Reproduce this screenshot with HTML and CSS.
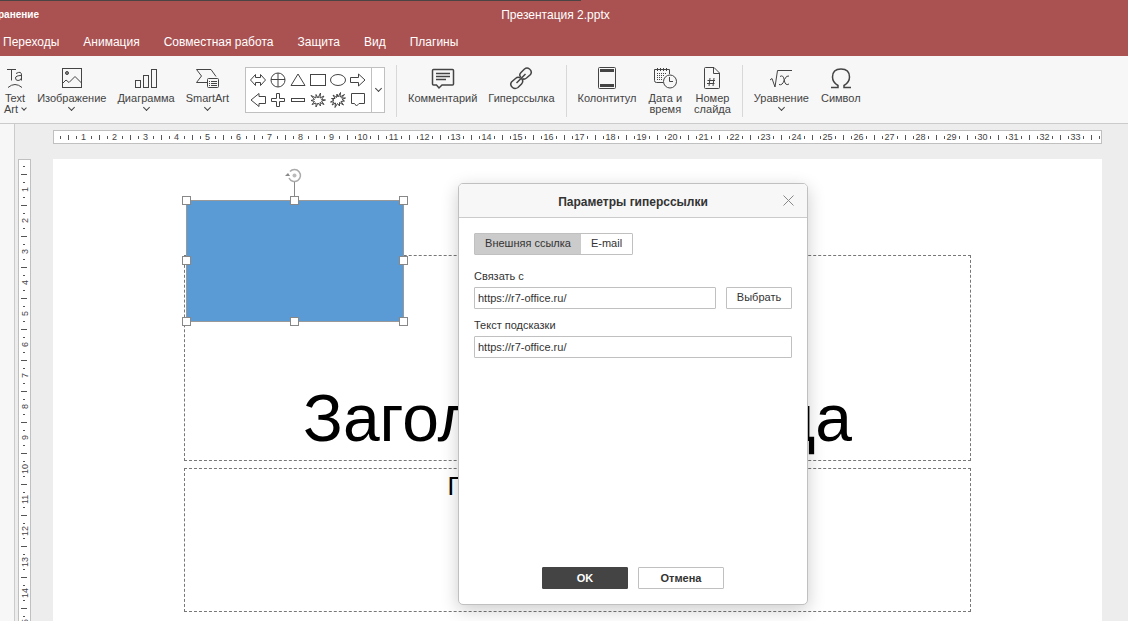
FILE: index.html
```
<!DOCTYPE html>
<html lang="ru">
<head>
  <meta charset="UTF-8">
  <title>Презентация 2.pptx</title>
  <meta name="viewport" content="width=device-width, initial-scale=1.0">
  <link rel="stylesheet" href="styles.css">
</head>
<body>

  <header class="app-header">
    <div class="title-row">
      <span class="doc-status">ранение</span>
      <h1>Презентация 2.pptx</h1>
    </div>
    <nav class="tabs">
      <a href="#">Переходы</a>
      <a href="#">Анимация</a>
      <a href="#">Совместная работа</a>
      <a href="#">Защита</a>
      <a href="#">Вид</a>
      <a href="#">Плагины</a>
    </nav>
  </header>

  <div class="toolbar">
    <div class="group">
      <button type="button" class="tool">
        <svg width="22" height="24" viewBox="0 0 22 24">
          <path d="M3 3.500H12M7.500 3.500V14.500M12 7.500Q17.500 4.500 17.500 9V14.500M17.500 9.500Q11.500 9.500 11.500 12Q11.500 14.500 14 14.500Q17 14.500 17.500 12M4 21.500Q11 15.500 18 21.500"/>
        </svg>
        <span>Text<br>Art <i class="caret inline"></i></span>
      </button>
      <button type="button" class="tool">
        <svg width="22" height="24" viewBox="0 0 22 24">
          <rect x="1.500" y="2.500" width="19" height="19"/>
          <circle cx="6" cy="7" r="1.500" fill="#888"/>
          <path d="M1.500 17.500L5 14L8 16.500L14 10.500L20.500 17"/>
        </svg>
        <span>Изображение</span>
        <i class="caret"></i>
      </button>
      <button type="button" class="tool">
        <svg width="24" height="24" viewBox="0 0 24 24">
          <rect x="1.500" y="14.500" width="5" height="7"/>
          <rect x="9.500" y="9.500" width="5" height="12"/>
          <rect x="17.500" y="3.500" width="5" height="18"/>
        </svg>
        <span>Диаграмма</span>
        <i class="caret"></i>
      </button>
      <button type="button" class="tool">
        <svg width="24" height="24" viewBox="0 0 24 24">
          <path d="M12 16.500H1.500L6.500 10L1.500 3.500H16L21 10.500"/>
          <rect x="12.500" y="12.500" width="11" height="9" rx="1"/>
          <path d="M14 15.500H15M16 15.500H22M14 17.500H15M16 17.500H22M14 19.500H15M16 19.500H22"/>
        </svg>
        <span>SmartArt</span>
        <i class="caret"></i>
      </button>

      <div class="gallery">
        <div class="shapes">
          <button type="button" aria-label="Двойная стрелка"><svg width="16" height="16" viewBox="0 0 16 16"><path d="M0.500 8L5.500 2.500V5.500H10.500V2.500L15.500 8L10.500 13.500V10.500H5.500V13.500Z"/></svg></button>
          <button type="button" aria-label="Круг с крестом"><svg width="16" height="16" viewBox="0 0 16 16"><circle cx="8" cy="8" r="7"/><path d="M8 1V15M1 7.500H15"/></svg></button>
          <button type="button" aria-label="Треугольник"><svg width="16" height="16" viewBox="0 0 16 16"><path d="M8 2L15 13.500H1Z"/></svg></button>
          <button type="button" aria-label="Прямоугольник"><svg width="16" height="16" viewBox="0 0 16 16"><rect x="0.500" y="2.500" width="15" height="11"/></svg></button>
          <button type="button" aria-label="Овал"><svg width="16" height="16" viewBox="0 0 16 16"><ellipse cx="8" cy="8" rx="7.500" ry="5.500"/></svg></button>
          <button type="button" aria-label="Стрелка вправо"><svg width="16" height="16" viewBox="0 0 16 16"><path d="M0.500 5.500H8.500V2L15 8L8.500 14V10.500H0.500Z"/></svg></button>
          <button type="button" aria-label="Стрелка влево"><svg width="16" height="16" viewBox="0 0 16 16"><path d="M15.500 4.500H9V1.500L1 8L9 14.500V11.500H15.500Z"/></svg></button>
          <button type="button" aria-label="Плюс"><svg width="16" height="16" viewBox="0 0 16 16"><path d="M6.500 1.500H9.500V6.500H14.500V9.500H9.500V14.500H6.500V9.500H1.500V6.500H6.500Z"/></svg></button>
          <button type="button" aria-label="Минус"><svg width="16" height="16" viewBox="0 0 16 16"><rect x="1.500" y="6.500" width="13" height="3"/></svg></button>
          <button type="button" aria-label="Вспышка 1"><svg width="16" height="16" viewBox="0 0 16 16"><path d="M8 6L10.500 1L10 6L14 4L11.500 7.500L15.500 8L11.500 9L14 12.500L10 10.500L10.500 14L8 11L6 15L6 11L2 12.500L4.500 9.500L1 8.500L4.500 7.500L1 3.500L6 6L6 2.500Z"/></svg></button>
          <button type="button" aria-label="Вспышка 2"><svg width="16" height="16" viewBox="0 0 16 16"><path d="M8 5L10.500 0.500L10 5L14.500 2.500L11.500 6L15.500 6L12 7.500L14.500 9L11 9.500L13.500 13L9.500 10.500L9.500 14L7.500 11.500L5 15.500L5.500 11L2 13L4 10L0.500 10L4 8L1.500 6.500L5 6.500L3 3L6.500 5.500L7 2Z"/></svg></button>
          <button type="button" aria-label="Выноска"><svg width="16" height="16" viewBox="0 0 16 16"><path d="M1.500 1.500H14.500V11.500H9L6.500 14L4.500 11.500H1.500Z"/></svg></button>
        </div>
        <button type="button" class="gallery-more" aria-label="Больше фигур"><i class="caret"></i></button>
      </div>
    </div>

    <div class="group">
      <button type="button" class="tool">
        <svg class="bold" width="24" height="24" viewBox="0 0 24 24">
          <path d="M1.500 4.500Q1.500 3.500 2.500 3.500H21.500Q22.500 3.500 22.500 4.500V18Q22.500 19 21.500 19H11L8 22L5.500 19H2.500Q1.500 19 1.500 18Z"/>
          <path d="M5 7.500H19M5 10.500H19M5 13.500H15"/>
        </svg>
        <span>Комментарий</span>
      </button>
      <button type="button" class="tool">
        <svg class="bold" width="24" height="24" viewBox="0 0 24 24">
          <path d="M12 11.500Q9.500 9 12 6.500L15.500 3Q18 1 20.500 3Q23.500 5.500 21.500 8.500L17.500 12Q15 14 13.500 12.500"/>
          <path d="M12.500 12.500Q15 15 12.500 18L9 21.500Q6 23.500 3.500 21.500Q0.500 19 2.500 16L6.500 12.500Q9 10.500 11 12M7.500 17L16.500 8"/>
        </svg>
        <span>Гиперссылка</span>
      </button>
    </div>

    <div class="group">
      <button type="button" class="tool">
        <svg width="20" height="24" viewBox="0 0 20 24">
          <rect x="1.500" y="1.500" width="17" height="21" rx="1"/>
          <path class="fill" d="M3 3H17V6H3ZM3 18H17V21H3Z"/>
        </svg>
        <span>Колонтитул</span>
      </button>
      <button type="button" class="tool">
        <svg width="24" height="24" viewBox="0 0 24 24">
          <path d="M10 16.500H3.500Q1.500 16.500 1.500 14.500V3.500H16.500V8M4.500 2V5M7.500 2V5M10.500 2V5M13.500 2V5"/>
          <path stroke-dasharray="1 1" d="M4 7.500H14M4 9.500H12M4 11.500H10M4 13.500H9"/>
          <circle cx="17" cy="15.500" r="6.500"/>
          <path d="M16.500 11V15.500H20"/>
        </svg>
        <span>Дата и<br>время</span>
      </button>
      <button type="button" class="tool">
        <svg width="20" height="24" viewBox="0 0 20 24">
          <path d="M3.500 1.500H12L17.500 7V21.500Q17.500 22.500 16.500 22.500H3.500Q2.500 22.500 2.500 21.500V2.500Q2.500 1.500 3.500 1.500ZM11.500 1.500V7.500H17.500"/>
          <path d="M8 12L7 20M12 12L11 20M5.500 14.500H13M5 17.500H12.500"/>
        </svg>
        <span>Номер<br>слайда</span>
      </button>
    </div>

    <div class="group">
      <button type="button" class="tool">
        <svg width="24" height="24" viewBox="0 0 24 24">
          <path d="M1 14L3 12.500L6 21L8.500 4.500H23"/>
          <path d="M11 10.500Q14 8.500 15 13Q16 20.500 20 18M20 10Q17.500 9 15.500 13.500Q13.500 20 10 18.500"/>
        </svg>
        <span>Уравнение</span>
        <i class="caret"></i>
      </button>
      <button type="button" class="tool">
        <svg class="bold" width="24" height="24" viewBox="0 0 24 24">
          <path d="M2 21.500H9V19.500Q3.500 16.500 3.500 11Q3.500 3 12 3Q20.500 3 20.500 11Q20.500 16.500 15 19.500V21.500H22"/>
        </svg>
        <span>Символ</span>
      </button>
    </div>
  </div>

  <main class="workspace">
    <aside class="side-panel"></aside>
    <div class="ruler-col">
      <ol class="ruler ruler-v" id="rulerV"></ol>
    </div>
    <div class="canvas">
      <ol class="ruler ruler-h" id="rulerH"></ol>
      <section class="slide">
        <div class="placeholder title-box">Заголовок слайда</div>
        <div class="placeholder subtitle-box">Подзаголовок слайда</div>
        <div class="shape">
          <svg class="rotate" width="18" height="32" viewBox="0 0 18 32">
            <path d="M9.500 15V32" stroke="#888"/>
            <path d="M5 4.500A6 6 0 1 1 4 11" stroke="#aaa" stroke-width="1.500"/>
            <circle cx="9.500" cy="8.500" r="2" fill="#bbb" stroke="none"/>
            <path d="M0 9L3 6L5 9Z" fill="#888" stroke="none"/>
          </svg>
          <i class="handle nw"></i><i class="handle n"></i><i class="handle ne"></i>
          <i class="handle w"></i><i class="handle e"></i>
          <i class="handle sw"></i><i class="handle s"></i><i class="handle se"></i>
        </div>
      </section>
    </div>
  </main>

  <form class="dialog" id="linkForm" role="dialog" aria-labelledby="dialogTitle">
    <div class="dialog-header">
      <h2 id="dialogTitle">Параметры гиперссылки</h2>
      <button type="button" class="close" aria-label="Закрыть">
        <svg width="11" height="11" viewBox="0 0 11 11"><path d="M0.500 0.500L10.500 10.500M10.500 0.500L0.500 10.500"/></svg>
      </button>
    </div>
    <div class="dialog-body">
      <div class="switch">
        <button type="button" class="active">Внешняя ссылка</button>
        <button type="button">E-mail</button>
      </div>
      <label for="linkUrl">Связать с</label>
      <div class="field-row">
        <input type="text" id="linkUrl" value="https://r7-office.ru/">
        <button type="button" class="btn pick">Выбрать</button>
      </div>
      <label for="linkTip">Текст подсказки</label>
      <input type="text" id="linkTip" value="https://r7-office.ru/">
    </div>
    <div class="dialog-footer">
      <button type="submit" class="btn primary">OK</button>
      <button type="button" class="btn">Отмена</button>
    </div>
  </form>

  <script>
    function fillRuler(id, count) {
      const ruler = document.getElementById(id);
      for (let i = 1; i <= count; i++) {
        const mark = document.createElement("li");
        mark.textContent = i;
        ruler.appendChild(mark);
      }
    }

    fillRuler("rulerH", 33);
    fillRuler("rulerV", 15);

    document.getElementById("linkForm").addEventListener("submit", function(e) {
      e.preventDefault();
    });
  </script>
</body>
</html>
```
FILE: styles.css
```
* { box-sizing: border-box; margin: 0; padding: 0; font-family: "Liberation Sans", Arial, sans-serif; }

body {
  display: flex;
  flex-direction: column;
  height: 100vh;
  overflow: hidden;
  background: #ededed;
  color: #444;
  font-size: 11px;
}

button { background: none; border: none; color: inherit; font-size: 11px; cursor: pointer; }
svg { fill: none; stroke: #444; }
svg.bold { stroke-width: 1.5; }
svg .fill { fill: #444; stroke: none; }

/* header */
.app-header {
  flex: none;
  padding-top: 1px;
  background: linear-gradient(#4a4444, #4a4444) no-repeat 0 0 / 581px 1px #aa5252;
  color: white;
  font-size: 12px;
}

.title-row { display: grid; grid-template-columns: 1fr auto 1fr; height: 27px; align-items: center; }
.title-row h1 { font-size: 12px; font-weight: normal; margin-right: 17px; }
.doc-status { font-size: 10px; font-weight: bold; margin-left: -2px; }

.tabs { display: flex; gap: 24px; height: 28px; align-items: center; padding-left: 3px; }
.tabs a { color: white; text-decoration: none; white-space: nowrap; }

/* toolbar */
.toolbar {
  flex: none;
  display: flex;
  height: 68px;
  padding: 9px 4px 0;
  background: #f7f7f7;
  border-bottom: 1px solid #cbcbcb;
}

.group { display: flex; gap: 11px; height: 52px; padding-right: 11px; }
.group + .group { padding-left: 11px; border-left: 1px solid #d8d8d8; }
.group:nth-child(n + 3) { gap: 12px; }

.tool {
  display: flex;
  flex-direction: column;
  align-items: center;
  line-height: 11px;
  white-space: nowrap;
}

.tool svg { flex: none; margin: 1px 0 3px; }

.caret {
  width: 5px;
  height: 5px;
  border: solid #444;
  border-width: 0 1px 1px 0;
  transform: rotate(45deg);
}

.tool > .caret { margin-top: 1px; }
.caret.inline { display: inline-block; width: 4px; height: 4px; margin: 0 0 3px 1px; }

.gallery {
  display: flex;
  width: 140px;
  height: 46px;
  margin: 2px 0 0 5px;
  background: white;
  border: 1px solid #c0c0c0;
}

.shapes { flex: 1; display: grid; grid-template-columns: repeat(6, 20px); grid-auto-rows: 20px; padding: 2px; }
.shapes button { display: grid; place-items: center; }
.gallery-more { display: grid; place-items: center; width: 13px; padding-bottom: 3px; border-left: 1px solid #c0c0c0; }

/* workspace */
.workspace { flex: 1; display: flex; min-height: 0; }
.side-panel { width: 15px; background: #f7f7f7; border-right: 1px solid #cbcbcb; }
.ruler-col { display: flex; width: 38px; padding: 35px 0 0 3px; }
.canvas { flex: 1; display: flex; flex-direction: column; margin-right: 26px; padding-top: 6px; min-width: 0; }

.ruler { display: flex; background-color: white; border: 1px solid #c0c0c0; list-style: none; font-size: 9px; overflow: hidden; }
.ruler li { flex: none; display: grid; place-items: center; }

.ruler-h {
  height: 14px;
  padding: 0 10px 0 14px;
  background-image:
    linear-gradient(90deg, #555 1px, transparent 1px),
    linear-gradient(90deg, #555 1px, transparent 1px),
    linear-gradient(90deg, #555 1px, transparent 1px);
  background-size: 31px 3px, 31px 5px, 31px 3px;
  background-position: 6px 5px, 14px 4px, 22px 5px;
  background-repeat: repeat-x;
}

.ruler-h li { width: 31px; }

.ruler-v {
  flex-direction: column;
  width: 13px;
  padding-top: 14px;
  border-bottom: none;
  background-image:
    linear-gradient(#555 1px, transparent 1px),
    linear-gradient(#555 1px, transparent 1px),
    linear-gradient(#555 1px, transparent 1px);
  background-size: 2px 31px, 6px 31px, 2px 31px;
  background-position: 4px 6px, 2px 14px, 4px 22px;
  background-repeat: repeat-y;
}

.ruler-v li { height: 31px; writing-mode: vertical-rl; transform: rotate(180deg); }

/* slide */
.slide { position: relative; flex: 1; margin-top: 15px; background: white; overflow: hidden; }

.placeholder {
  position: absolute;
  left: 131px;
  right: 131px;
  border: 1px dashed #777;
  color: black;
  text-align: center;
  white-space: nowrap;
}

.title-box { top: 96px; height: 206px; padding-top: 124px; font-size: 66px; line-height: 76px; }
.subtitle-box { top: 309px; height: 144px; padding-top: 2px; font-size: 26px; line-height: 30px; }

.shape {
  position: absolute;
  left: 133px;
  top: 41px;
  width: 218px;
  height: 122px;
  background: #5b9bd5;
  border: 1px solid #999;
}

.rotate { position: absolute; left: 98px; top: -34px; }
.handle { position: absolute; width: 9px; height: 9px; background: white; border: 1px solid #888; }
.nw, .n, .ne { top: -5px; }
.w, .e { top: 55px; }
.sw, .s, .se { bottom: -5px; }
.nw, .w, .sw { left: -5px; }
.n, .s { left: 103px; }
.ne, .e, .se { right: -5px; }

/* dialog */
.dialog {
  position: absolute;
  left: 458px;
  top: 183px;
  display: flex;
  flex-direction: column;
  width: 350px;
  height: 422px;
  background: white;
  border: 1px solid #c0c0c0;
  border-radius: 5px;
  box-shadow: 0 5px 18px rgba(0, 0, 0, 0.2);
  color: #333;
  overflow: hidden;
}

.dialog-header {
  position: relative;
  height: 34px;
  background: #f7f7f7;
  border-bottom: 1px solid #cbcbcb;
  text-align: center;
}

.dialog-header h2 { font-size: 12px; line-height: 36px; }
.close { position: absolute; right: 13px; top: 11px; line-height: 0; }
.close svg { stroke: #888; }

.dialog-body { flex: 1; padding: 15px; }

.switch { display: flex; width: 159px; height: 22px; margin-bottom: 15px; border: 1px solid #c0c0c0; border-radius: 1px; }
.switch button { flex: 1; padding-bottom: 2px; white-space: nowrap; }
.switch .active { flex: none; width: 106px; background: #cbcbcb; }

.dialog label { display: block; line-height: 13px; margin-bottom: 4px; }

.dialog input {
  width: 100%;
  height: 22px;
  padding: 0 3px;
  border: 1px solid #c0c0c0;
  border-radius: 1px;
  color: #333;
  font-size: 11px;
}

.field-row { display: flex; gap: 10px; margin-bottom: 10px; }

.btn { flex: none; width: 86px; height: 22px; border: 1px solid #c0c0c0; border-radius: 1px; font-weight: bold; }
.btn.pick { width: 66px; padding-bottom: 2px; font-weight: normal; }
.btn.primary { background: #444; border-color: #444; color: white; }

.dialog-footer { display: flex; justify-content: center; gap: 10px; padding-bottom: 15px; }
```
